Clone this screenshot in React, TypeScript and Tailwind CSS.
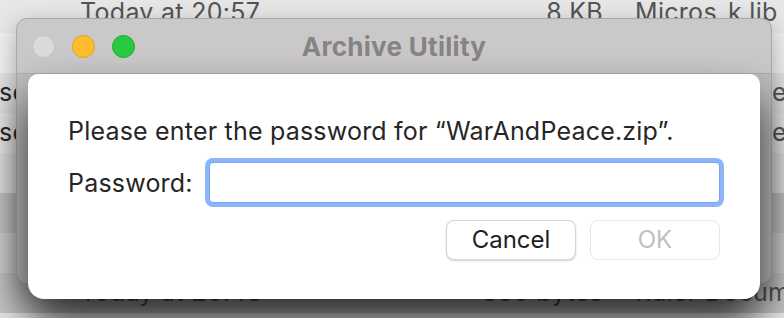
import React from 'react';

interface IRow {
  bg: string;
  name?: string;
  date?: string;
  size?: string;
  kind?: string;
  tail?: string;
}

const rows: IRow[] = [
  { bg: 'bg-[#e7e7e7]', date: 'Today at 20:57', size: '8 KB', kind: 'Micros', tail: 'k lib' },
  { bg: 'bg-[#efefef]' },
  { bg: 'bg-[#e2e2e2]', name: 'se', tail: 'e' },
  { bg: 'bg-[#e9e9e9]', name: 'se', tail: 'e' },
  { bg: 'bg-[#e1e1e1]' },
  { bg: 'bg-[#c3c3c3]' },
  { bg: 'bg-[#d0d0d0]' },
  { bg: 'bg-[#c4c4c4]', date: 'Today at 20:48', size: '350 bytes', kind: 'Ruler Document' },
];

const FinderRow: React.FC<{ row: IRow }> = ({ row }) => (
  <div className={`flex h-[40px] shrink-0 items-center whitespace-nowrap text-[25px] tracking-[0.3px] text-[#555] ${row.bg}`}>
    <span className="-ml-[1px] w-[81px] shrink-0 text-[#2a2a2a]">{row.name}</span>
    <span className="w-[300px] shrink-0">{row.date}</span>
    <span className="w-[223px] shrink-0 text-right">{row.size}</span>
    <span className="ml-[32px] w-[93px] shrink-0">{row.kind}</span>
    <span className={row.name ? 'pl-[44px]' : ''}>{row.tail}</span>
  </div>
);

const TrafficLight: React.FC<{ color: string }> = ({ color }) => (
  <span className={`block h-[23px] w-[23px] rounded-full border ${color}`} />
);

export default function App() {
  return (
    <div className="relative h-[318px] w-[784px] overflow-hidden bg-[#e8e8e8] font-['Inter',sans-serif]">
      <div className="-mt-[7px] flex flex-col">
        {rows.map((row, i) => (
          <FinderRow key={i} row={row} />
        ))}
      </div>

      {/* Archive Utility window with its sheet */}
      <div className="absolute left-[16px] top-[18px] h-[266px] w-[756px] rounded-[11px] border border-[#a8a8a8] bg-[#bdbdbd] shadow-[0_8px_24px_rgba(0,0,0,0.3)]">
        <div className="grid h-[55px] grid-cols-[1fr_auto_1fr] items-center rounded-t-[10px] border-b border-[#adabab] bg-[#cac8c8] px-[15px]">
          <div className="flex items-center gap-[17px]">
            <TrafficLight color="border-[#c6c2c2] bg-[#dcd9d9]" />
            <TrafficLight color="border-[#dda225] bg-[#febc2e]" />
            <TrafficLight color="border-[#1dab2c] bg-[#28c840]" />
          </div>
          <h1 className="text-[26px] font-bold tracking-[0.3px] text-[#858383]">Archive Utility</h1>
          <div />
        </div>

        <div className="mx-[11px] flex h-[225px] flex-col rounded-t-[10px] rounded-b-[16px] bg-white px-[40px] pt-[42px] text-[#262626] shadow-[0_26px_44px_rgba(0,0,0,0.75)]">
          <p className="text-[25px] leading-[30px] tracking-[0.2px]">
            Please enter the password for “WarAndPeace.zip”.
          </p>

          <div className="mt-[16px] flex items-center gap-[16px]">
            <label className="text-[25px] leading-[30px] tracking-[0.2px]">Password:</label>
            <input
              type="password"
              readOnly
              className="h-[41px] flex-1 rounded-[4px] border border-[#7aa3ee] bg-white shadow-[0_0_0_4px_#8db4f9] outline-none"
            />
          </div>

          <div className="mt-[17px] flex justify-end gap-[14px]">
            <button className="h-[40px] w-[130px] rounded-[8px] border border-[#d4d4d4] bg-white text-[24px] text-[#1f1f1f] shadow-[0_1px_2px_rgba(0,0,0,0.18)]">
              Cancel
            </button>
            <button
              disabled
              className="h-[40px] w-[130px] rounded-[8px] border border-[#e6e6e6] bg-white text-[24px] text-[#c0c0c0]"
            >
              OK
            </button>
          </div>
        </div>
      </div>
    </div>
  );
}
